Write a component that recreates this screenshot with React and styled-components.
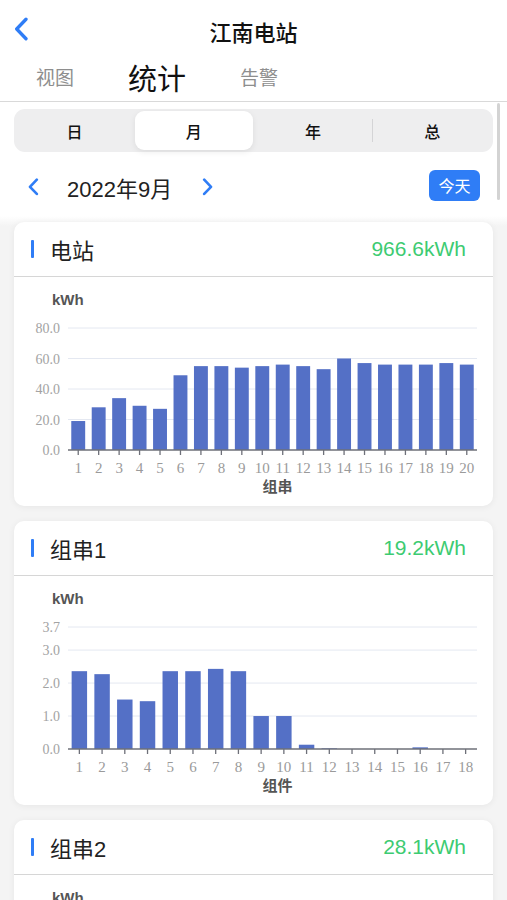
import React from 'react'
import styled, { createGlobalStyle } from 'styled-components'

const GlobalStyle = createGlobalStyle`
  html, body {
    margin: 0;
    padding: 0;
    background: #ffffff;
  }
  body {
    font-family: "Liberation Sans", "Noto Sans CJK SC", sans-serif;
    color: #222;
  }
`

const BLUE = '#2f7df6'
const BAR = '#5470c6'

const STATION = [19, 28, 34, 29, 27, 49, 55, 55, 54, 55, 56, 55, 53, 60, 57, 56, 56, 56, 57, 56]
const STRING1 = [2.36, 2.27, 1.5, 1.45, 2.36, 2.36, 2.43, 2.36, 1.0, 1.0, 0.13, 0.02, 0, 0, 0, 0.05, 0, 0]
const STRING2 = [1.5, 1.6, 1.7, 1.6, 1.5, 1.6, 1.7, 1.6, 1.5, 1.6, 1.7, 1.6, 1.5, 1.6, 1.7, 1.6, 1.5, 1.6]

const SEGMENTS = ['日', '月', '年', '总']

const Chevron = ({ dir = 'left', size = 14, width = 2.4 }) => (
    <svg width={size} height={size * 1.6} viewBox="0 0 10 16" fill="none">
        <path
            d={dir === 'left' ? 'M8 1.5 L1.8 8 L8 14.5' : 'M2 1.5 L8.2 8 L2 14.5'}
            stroke={BLUE}
            strokeWidth={width}
            strokeLinecap="round"
            strokeLinejoin="round"
        />
    </svg>
)

const BarChart = ({ values, max, ticks, unit, xName }) => {
    const left = 54
    const right = 463
    const top = 51
    const bottom = 173
    const slot = (right - left) / values.length
    const barW = slot * 0.68
    const y = (v) => bottom - (v / max) * (bottom - top)

    return (
        <ChartSvg width="479" height="229" viewBox="0 0 479 229">
            <text x="38" y="28" fontSize="15" fontWeight="600" fill="#555"
                fontFamily="Liberation Sans, sans-serif">{unit}</text>
            {ticks.map((t) => (
                <g key={t}>
                    {t !== 0 && <line x1={left} x2={right} y1={y(t)} y2={y(t)} stroke="#e4e8f1" strokeWidth="1" />}
                    <text x="46" y={y(t) + 5} fontSize="14" fill="#a3a3a3" textAnchor="end"
                        fontFamily="Liberation Serif, serif">{t.toFixed(1)}</text>
                </g>
            ))}
            {values.map((v, i) => {
                const cx = left + slot * (i + 0.5)
                const h = (v / max) * (bottom - top)
                return (
                    <g key={i}>
                        {v > 0 && <rect x={cx - barW / 2} y={bottom - h} width={barW} height={h} fill={BAR} />}
                        <line x1={cx} x2={cx} y1={bottom} y2={bottom + 5} stroke="#6e7079" strokeWidth="1.3" />
                        <text x={cx} y={bottom + 23} fontSize="15" fill="#9a9a9a" textAnchor="middle"
                            fontFamily="Liberation Serif, serif">{i + 1}</text>
                    </g>
                )
            })}
            <line x1={left} x2={right} y1={bottom} y2={bottom} stroke="#6e7079" strokeWidth="1.3" />
            <text x={(left + right) / 2 + 5} y="215" fontSize="15" fontWeight="600" fill="#555" textAnchor="middle"
                fontFamily="Noto Sans CJK SC, sans-serif">{xName}</text>
        </ChartSvg>
    )
}

const EnergyCard = ({ title, total, children }) => (
    <Card>
        <CardHeader>
            <Marker />
            <CardTitle>{title}</CardTitle>
            <CardTotal>{total}</CardTotal>
        </CardHeader>
        {children}
    </Card>
)

const App = () => {
    const active = 1

    return <Page>
        <GlobalStyle />
        <NavBar>
            <BackButton><Chevron size={15} width={2.2} /></BackButton>
            <NavTitle>江南电站</NavTitle>
        </NavBar>
        <Tabs>
            <Tab>视图</Tab>
            <Tab $active>统计</Tab>
            <Tab>告警</Tab>
        </Tabs>
        <Top>
            <Segmented>
                {SEGMENTS.map((s, i) => (
                    <Segment key={s} $active={i === active} $divider={i === 3}>{s}</Segment>
                ))}
            </Segmented>
            <DateRow>
                <DateNav>
                    <ArrowButton><Chevron size={11} /></ArrowButton>
                    <DateText>2022年9月</DateText>
                    <ArrowButton><Chevron dir="right" size={11} /></ArrowButton>
                </DateNav>
                <TodayButton>今天</TodayButton>
            </DateRow>
            <ScrollThumb />
        </Top>
        <List>
            <EnergyCard title="电站" total="966.6kWh">
                <BarChart values={STATION} max={80} ticks={[0, 20, 40, 60, 80]} unit="kWh" xName="组串" />
            </EnergyCard>
            <EnergyCard title="组串1" total="19.2kWh">
                <BarChart values={STRING1} max={3.7} ticks={[0, 1, 2, 3, 3.7]} unit="kWh" xName="组件" />
            </EnergyCard>
            <EnergyCard title="组串2" total="28.1kWh">
                <BarChart values={STRING2} max={3.7} ticks={[0, 1, 2, 3, 3.7]} unit="kWh" xName="组件" />
            </EnergyCard>
        </List>
    </Page>
}
export default App


const Page = styled.div`
    width: 507px;
    height: 900px;
    overflow: hidden;
    background: #f4f4f4;
`

const NavBar = styled.header`
    position: relative;
    height: 60px;
    display: flex;
    align-items: center;
    justify-content: center;
    background: #fff;
`

const BackButton = styled.div`
    position: absolute;
    left: 14px;
    top: 17px;
    display: flex;
`

const NavTitle = styled.h1`
    margin: 2px 0 0;
    font-size: 22px;
    font-weight: 500;
    color: #111;
    font-family: "Noto Sans CJK SC", sans-serif;
`

const Tabs = styled.nav`
    height: 41px;
    display: flex;
    align-items: center;
    gap: 54px;
    padding: 0 0 0 36px;
    background: #fff;
    border-bottom: 1px solid #d9d9d9;
`

const Tab = styled.div`
    font-family: "Noto Sans CJK SC", sans-serif;
    font-size: ${(p) => (p.$active ? '29px' : '19px')};
    color: ${(p) => (p.$active ? '#111' : '#8e8e8e')};
    line-height: 1;
    margin-top: ${(p) => (p.$active ? '-6px' : '-8px')};
`

const Top = styled.section`
    position: relative;
    background: #fff;
    padding: 7px 14px 0;
`

const ScrollThumb = styled.div`
    position: absolute;
    right: 7px;
    top: 1px;
    width: 3px;
    height: 97px;
    border-radius: 2px;
    background: #d3d3d3;
`

const Segmented = styled.div`
    height: 43px;
    box-sizing: border-box;
    padding: 2px;
    display: grid;
    grid-template-columns: repeat(4, 1fr);
    gap: 2px;
    background: #eeeeef;
    border-radius: 11px;
`

const Segment = styled.div`
    position: relative;
    display: flex;
    align-items: center;
    justify-content: center;
    font-family: "Noto Sans CJK SC", sans-serif;
    font-size: 16px;
    font-weight: 500;
    color: #111;
    border-radius: 9px;
    background: ${(p) => (p.$active ? '#fff' : 'transparent')};
    box-shadow: ${(p) => (p.$active ? '0 2px 6px rgba(0,0,0,0.08)' : 'none')};
    &::before {
        content: '';
        display: ${(p) => (p.$divider ? 'block' : 'none')};
        position: absolute;
        left: -2px;
        top: 8px;
        bottom: 8px;
        width: 1px;
        background: #d4d4d6;
    }
`

const DateRow = styled.div`
    height: 58px;
    display: flex;
    align-items: center;
    justify-content: space-between;
    padding: 0 13px 0 14px;
    margin-top: 6px;
    box-sizing: border-box;
`

const DateNav = styled.div`
    display: flex;
    align-items: center;
`

const ArrowButton = styled.div`
    display: flex;
    align-items: center;
`

const DateText = styled.span`
    font-size: 22px;
    color: #222;
    margin: 0 30px 0 28px;
    font-family: "Liberation Sans", "Noto Sans CJK SC", sans-serif;
`

const TodayButton = styled.button`
    width: 51px;
    height: 31px;
    border: none;
    border-radius: 6px;
    background: ${BLUE};
    color: #fff;
    font-size: 16px;
    font-family: "Noto Sans CJK SC", sans-serif;
    padding: 0;
    margin-top: -4px;
`

const List = styled.main`
    display: flex;
    flex-direction: column;
    gap: 15px;
    padding: 6px 14px 20px;
    background: linear-gradient(#fff 0, #f4f4f4 10px);
`

const Card = styled.article`
    background: #fff;
    border-radius: 10px;
    box-shadow: 0 1px 7px rgba(0, 0, 0, 0.06);
    overflow: hidden;
    flex-shrink: 0;
`

const CardHeader = styled.div`
    height: 54px;
    display: flex;
    align-items: center;
    padding: 0 27px 0 17px;
    border-bottom: 1px solid #d6d6d6;
`

const Marker = styled.span`
    width: 3px;
    height: 18px;
    border-radius: 1px;
    background: ${BLUE};
    margin-right: 16px;
`

const CardTitle = styled.span`
    font-size: 22px;
    color: #222;
    font-family: "Liberation Sans", "Noto Sans CJK SC", sans-serif;
`

const CardTotal = styled.span`
    margin-left: auto;
    font-size: 21px;
    color: #3dcb72;
`

const ChartSvg = styled.svg`
    display: block;
`
